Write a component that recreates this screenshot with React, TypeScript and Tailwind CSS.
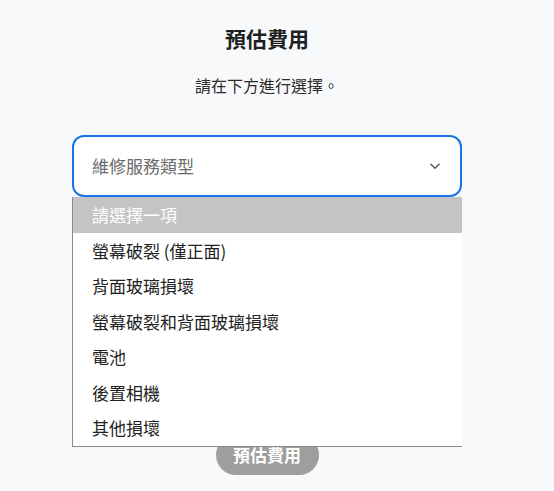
import React from 'react';

const options = [
  '請選擇一項',
  '螢幕破裂 (僅正面)',
  '背面玻璃損壞',
  '螢幕破裂和背面玻璃損壞',
  '電池',
  '後置相機',
  '其他損壞',
];

export default function App() {
  return (
    <div
      className="min-h-screen bg-[#f8f9fb] pt-[24px]"
      style={{ fontFamily: '"Noto Sans CJK TC", "Noto Sans", sans-serif' }}
    >
      <div className="ml-[72px] w-[390px] flex flex-col items-center">
        <h1 className="text-[21px] leading-[28px] font-bold text-[#1f1f1f]">預估費用</h1>
        <p className="mt-[21px] text-[16px] leading-[24px] text-[#2b2b2b]">請在下方進行選擇。</p>

        {/* 下拉選單 */}
        <div className="relative mt-[38px] w-full">
          <div className="flex h-[62px] items-center justify-between rounded-[12px] border-2 border-[#1a73e8] bg-white pl-[18px] pr-[18px]">
            <span className="text-[17px] text-[#6b6b6b]">維修服務類型</span>
            <svg width="14" height="14" viewBox="0 0 24 24" fill="none" stroke="#555" strokeWidth="2.5" strokeLinecap="round" strokeLinejoin="round">
              <path d="M5 9l7 7 7-7" />
            </svg>
          </div>

          <ul className="absolute left-0 top-full z-10 w-full border-l border-b border-[#8a8a8a] bg-white">
            {options.map((o, i) => (
              <li
                key={o}
                className={`flex h-[35.5px] items-center pl-[19px] text-[17px] ${
                  i === 0 ? 'bg-[#c4c4c4] text-white' : 'text-[#222]'
                }`}
              >
                {o}
              </li>
            ))}
          </ul>
        </div>

        <button className="mt-[238px] h-[40px] w-[103px] rounded-full bg-[#9e9e9e] text-[17px] font-bold text-white">
          預估費用
        </button>
      </div>
    </div>
  );
}
